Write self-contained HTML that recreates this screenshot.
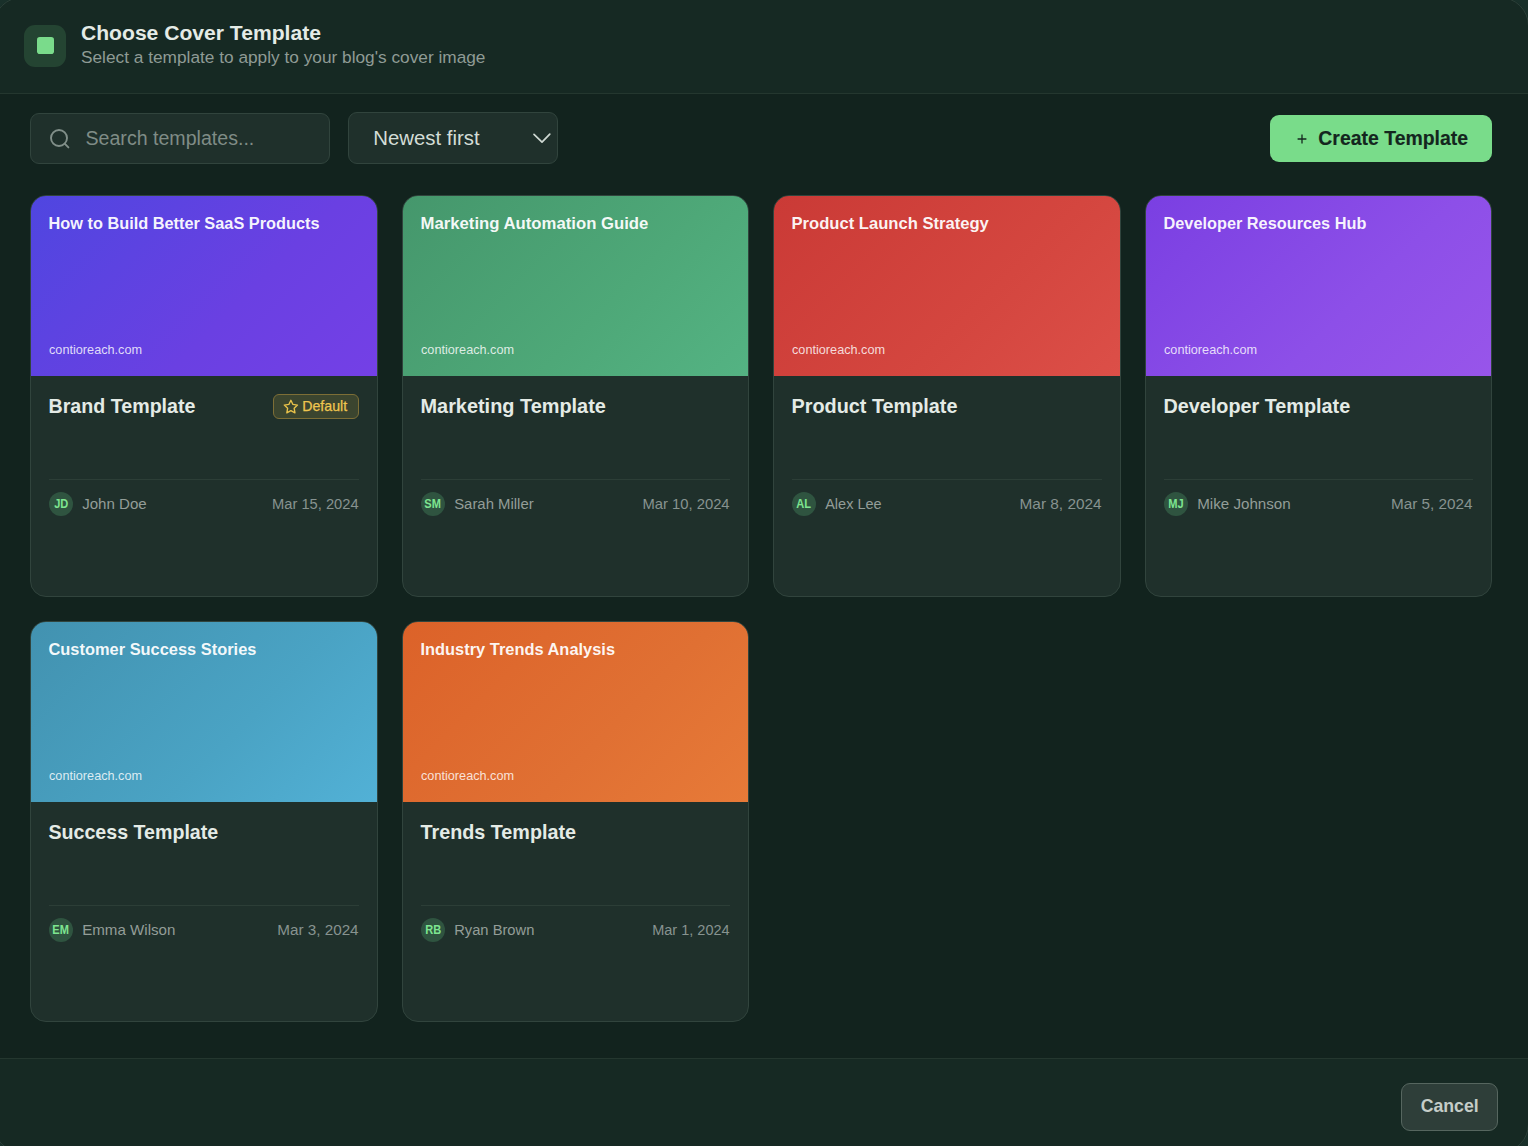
<!DOCTYPE html>
<html><head><meta charset="utf-8"><style>
*{margin:0;padding:0;box-sizing:border-box}
html,body{width:1528px;height:1146px;overflow:hidden;background:#12231e;font-family:"Liberation Sans",sans-serif}
.modal{position:absolute;left:-6.8px;top:-2.6px;width:1535.6px;height:1155.6px;border-radius:29px;border:1px solid #2b3f38;box-shadow:0 0 0 60px #19302a;pointer-events:none}
.t{position:absolute;white-space:nowrap;line-height:1}
.head{position:absolute;left:0;top:0;width:1528px;height:94px;background:#162923;border-bottom:1px solid #24372f}
.foot{position:absolute;left:0;top:1058px;width:1528px;height:88px;background:#162923;border-top:1px solid #24372f}
.abs{position:absolute}
.card{position:absolute;background:#1f302b;border:1px solid #31443d;border-radius:16px;overflow:hidden}
.card .t{}
.img{position:absolute;left:0;top:0;right:0;height:180px}
.badge{position:absolute;right:17.8px;top:198.4px;width:86px;height:24.6px;border-radius:6px;background:#3b452f;border:1px solid #7d6e36}
.div{position:absolute;left:17.5px;right:18px;top:283px;height:1px;background:#2c3e37}
.av{position:absolute;left:17.5px;top:296px;width:24px;height:24px;border-radius:50%;background:#2f5440;color:#7ee590;font-weight:700;font-size:12.3px;line-height:24px;text-align:center}
.av span{display:inline-block;transform:scaleX(0.9) translateX(0.4px)}
</style></head><body>
<div class="head"></div>
<div class="abs" style="left:24px;top:25px;width:42px;height:42px;border-radius:11px;background:#244432"></div>
<div class="abs" style="left:36.8px;top:36.8px;width:17.4px;height:17.4px;border-radius:2.8px;background:#7adb8b"></div>
<div class="t" style="left:81px;top:22.34px;font-size:21.1px;color:#e4ebe6;font-weight:700;">Choose Cover Template</div>
<div class="t" style="left:81px;top:48.87px;font-size:17.28px;color:#8f9b95;font-weight:400;">Select a template to apply to your blog&#39;s cover image</div>

<div class="abs" style="left:30px;top:113px;width:300px;height:51px;border-radius:9px;background:#1f302b;border:1px solid #31443d"></div>
<svg class="abs" style="left:48px;top:127px" width="24" height="24" viewBox="0 0 24 24" fill="none" stroke="#818f89" stroke-width="1.9" stroke-linecap="round"><circle cx="11" cy="11" r="8"/><path d="m20.4 20.4-3.7-3.7"/></svg>
<div class="t" style="left:85.5px;top:129.21px;font-size:19.6px;color:#7f8c86;font-weight:400;">Search templates...</div>

<div class="abs" style="left:348px;top:112px;width:210px;height:52.4px;border-radius:9px;background:#1f302b;border:1px solid #31443d"></div>
<div class="t" style="left:373.3px;top:127.77px;font-size:20.36px;color:#d3ddd6;font-weight:400;">Newest first</div>
<svg class="abs" style="left:532px;top:130px" width="20" height="16" viewBox="0 0 20 16" fill="none" stroke="#cfd9d3" stroke-width="1.7" stroke-linecap="round" stroke-linejoin="round"><path d="M2.0 4.4 L10 12.1 L17.8 4.2"/></svg>

<div class="abs" style="left:1270px;top:115px;width:222px;height:47px;border-radius:9px;background:#79dc8a"></div>
<svg class="abs" style="left:1296.8px;top:133.6px" width="10" height="10" viewBox="0 0 10 10" stroke="#15271f" stroke-width="1.3"><path d="M5 0.6v8.8M0.6 5h8.8"/></svg>
<div class="t" style="left:1318.3px;top:129.24px;font-size:19.45px;color:#14261e;font-weight:700;-webkit-text-stroke:0.15px #14261e;">Create Template</div>

<div class="card" style="left:30px;top:195px;width:348px;height:402px"><div class="img" style="background:linear-gradient(135deg,#4f46e0 0%,#6a40e2 60%,#7440e6 100%);"><div class="t" style="left:17.5px;top:19.39px;font-size:16.32px;color:rgba(255,255,255,0.95);font-weight:700;">How to Build Better SaaS Products</div><div class="t" style="left:18.0px;top:148.05px;font-size:12.7px;color:rgba(255,255,255,0.82);font-weight:400;">contioreach.com</div></div><div class="t" style="left:17.5px;top:200.67px;font-size:19.65px;color:#e4ebe6;font-weight:700;">Brand Template</div><div class="badge"><svg width="15.8" height="15.8" viewBox="0 0 24 24" style="position:absolute;left:8.6px;top:3.6px" fill="none" stroke="#e9c24a" stroke-width="2.1" stroke-linejoin="round"><polygon points="12 2 15.09 8.26 22 9.27 17 14.14 18.18 21.02 12 17.77 5.82 21.02 7 14.14 2 9.27 8.91 8.26 12 2"/></svg><div class="t" style="left:28.0px;top:3.58px;font-size:14.2px;color:#efc54f;font-weight:400;-webkit-text-stroke:0.25px #efc54f;">Default</div></div><div class="div"></div><div class="av"><span>JD</span></div><div class="t" style="left:51.2px;top:299.83px;font-size:15.09px;color:#939d98;font-weight:400;">John Doe</div><div class="t" style="right:18.4px;top:300.66px;font-size:14.69px;color:#879390;font-weight:400;">Mar 15, 2024</div></div><div class="card" style="left:402px;top:195px;width:347px;height:402px"><div class="img" style="background:linear-gradient(135deg,#45976c 0%,#4ea878 60%,#54b383 100%);"><div class="t" style="left:17.5px;top:19.54px;font-size:16.73px;color:rgba(255,255,255,0.95);font-weight:700;">Marketing Automation Guide</div><div class="t" style="left:18.0px;top:148.05px;font-size:12.7px;color:rgba(255,255,255,0.82);font-weight:400;">contioreach.com</div></div><div class="t" style="left:17.5px;top:200.95px;font-size:19.9px;color:#e4ebe6;font-weight:700;">Marketing Template</div><div class="div"></div><div class="av"><span>SM</span></div><div class="t" style="left:51.2px;top:300.89px;font-size:14.9px;color:#939d98;font-weight:400;">Sarah Miller</div><div class="t" style="right:18.4px;top:300.57px;font-size:14.8px;color:#879390;font-weight:400;">Mar 10, 2024</div></div><div class="card" style="left:773px;top:195px;width:348px;height:402px"><div class="img" style="background:linear-gradient(135deg,#ca3a36 0%,#d4463f 60%,#dc4f48 100%);"><div class="t" style="left:17.5px;top:19.65px;font-size:16.6px;color:rgba(255,255,255,0.95);font-weight:700;">Product Launch Strategy</div><div class="t" style="left:18.0px;top:148.05px;font-size:12.7px;color:rgba(255,255,255,0.82);font-weight:400;">contioreach.com</div></div><div class="t" style="left:17.5px;top:200.51px;font-size:19.83px;color:#e4ebe6;font-weight:700;">Product Template</div><div class="div"></div><div class="av"><span>AL</span></div><div class="t" style="left:51.2px;top:300.81px;font-size:14.52px;color:#939d98;font-weight:400;">Alex Lee</div><div class="t" style="right:18.4px;top:299.57px;font-size:15.39px;color:#879390;font-weight:400;">Mar 8, 2024</div></div><div class="card" style="left:1145px;top:195px;width:347px;height:402px"><div class="img" style="background:linear-gradient(135deg,#7a3fe2 0%,#8d4fe8 60%,#9855ea 100%);"><div class="t" style="left:17.5px;top:19.39px;font-size:16.31px;color:rgba(255,255,255,0.95);font-weight:700;">Developer Resources Hub</div><div class="t" style="left:18.0px;top:148.05px;font-size:12.7px;color:rgba(255,255,255,0.82);font-weight:400;">contioreach.com</div></div><div class="t" style="left:17.5px;top:200.53px;font-size:19.81px;color:#e4ebe6;font-weight:700;">Developer Template</div><div class="div"></div><div class="av"><span>MJ</span></div><div class="t" style="left:51.2px;top:299.76px;font-size:15.17px;color:#939d98;font-weight:400;">Mike Johnson</div><div class="t" style="right:18.4px;top:299.65px;font-size:15.3px;color:#879390;font-weight:400;">Mar 5, 2024</div></div><div class="card" style="left:30px;top:621px;width:348px;height:401px"><div class="img" style="background:linear-gradient(135deg,#4292b0 0%,#4aa3c4 60%,#52b1d6 100%);"><div class="t" style="left:17.5px;top:19.30px;font-size:16.42px;color:rgba(255,255,255,0.95);font-weight:700;">Customer Success Stories</div><div class="t" style="left:18.0px;top:148.05px;font-size:12.7px;color:rgba(255,255,255,0.82);font-weight:400;">contioreach.com</div></div><div class="t" style="left:17.5px;top:200.69px;font-size:19.62px;color:#e4ebe6;font-weight:700;">Success Template</div><div class="div"></div><div class="av"><span>EM</span></div><div class="t" style="left:51.2px;top:299.81px;font-size:15.11px;color:#939d98;font-weight:400;">Emma Wilson</div><div class="t" style="right:18.4px;top:299.68px;font-size:15.26px;color:#879390;font-weight:400;">Mar 3, 2024</div></div><div class="card" style="left:402px;top:621px;width:347px;height:401px"><div class="img" style="background:linear-gradient(135deg,#dc6229 0%,#e07033 60%,#e77a38 100%);"><div class="t" style="left:17.5px;top:19.31px;font-size:16.41px;color:rgba(255,255,255,0.95);font-weight:700;">Industry Trends Analysis</div><div class="t" style="left:18.0px;top:148.05px;font-size:12.7px;color:rgba(255,255,255,0.82);font-weight:400;">contioreach.com</div></div><div class="t" style="left:17.5px;top:200.58px;font-size:19.75px;color:#e4ebe6;font-weight:700;">Trends Template</div><div class="div"></div><div class="av"><span>RB</span></div><div class="t" style="left:51.2px;top:300.63px;font-size:14.73px;color:#939d98;font-weight:400;">Ryan Brown</div><div class="t" style="right:18.4px;top:300.80px;font-size:14.53px;color:#879390;font-weight:400;">Mar 1, 2024</div></div>

<div class="foot"></div>
<div class="modal"></div>
<div class="abs" style="left:1401px;top:1083px;width:97px;height:47.5px;border-radius:9px;background:#2e3e39;border:1px solid #56665f"></div>
<div class="t" style="left:1420.7px;top:1098.32px;font-size:17.7px;color:#c5cdc8;font-weight:700;">Cancel</div>
</body></html>
